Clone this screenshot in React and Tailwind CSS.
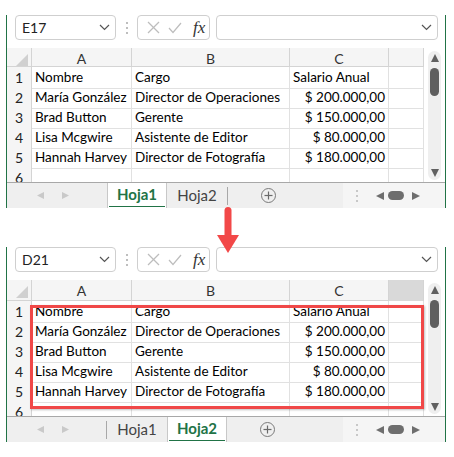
import React from 'react';

const ROWS = [
  ['Nombre', 'Cargo', 'Salario Anual'],
  ['María González', 'Director de Operaciones', '$ 200.000,00'],
  ['Brad Button', 'Gerente', '$ 150.000,00'],
  ['Lisa Mcgwire', 'Asistente de Editor', '$ 80.000,00'],
  ['Hannah Harvey', 'Director de Fotografía', '$ 180.000,00'],
  ['', '', ''],
];

function Chevron() {
  return (
    <svg width="11" height="7" viewBox="0 0 11 7">
      <polyline points="1,1 5.5,5.5 10,1" fill="none" stroke="#555" strokeWidth="1.2" />
    </svg>
  );
}

function Tri({ dir, color, size = 7 }) {
  const pts = {
    left: `${size},0 0,${size / 2} ${size},${size}`,
    right: `0,0 ${size},${size / 2} 0,${size}`,
    up: `0,${size} ${size / 2},0 ${size},${size}`,
    down: `0,0 ${size},0 ${size / 2},${size}`,
  }[dir];
  return (
    <svg width={size} height={size} viewBox={`0 0 ${size} ${size}`}>
      <polygon points={pts} fill={color} />
    </svg>
  );
}

function VDots({ color = '#b5b5b5' }) {
  return (
    <div className="flex flex-col gap-[3px]">
      <div className="w-[2px] h-[2px] rounded-full" style={{ background: color }} />
      <div className="w-[2px] h-[2px] rounded-full" style={{ background: color }} />
      <div className="w-[2px] h-[2px] rounded-full" style={{ background: color }} />
    </div>
  );
}

function Tab({ label, active }) {
  if (active) {
    return (
      <div className="w-[60px] h-full flex flex-col bg-white border-x border-[#c8c8c8]">
        <div className="flex-1 flex items-center justify-center text-[15px] font-bold text-[#217346]">{label}</div>
        <div className="mx-[1px] mb-[2px] h-[2px] bg-[#217346]" />
      </div>
    );
  }
  return (
    <div className="w-[60px] h-full flex items-center justify-center text-[15px] text-[#444]">{label}</div>
  );
}

function Panel({ cell, active, formulaMt, headerH, selCol, thumbMt }) {
  return (
    <div className="ml-[6px] w-[440px] border-x border-[#217346] bg-white">
      {/* formula bar */}
      <div className="flex items-center h-[25px]" style={{ marginTop: formulaMt }}>
        <div className="ml-[8px] w-[101px] h-[25px] rounded-[4px] border border-[#cfcfcf] flex items-center justify-between pl-[6px] pr-[5px]">
          <span className="text-[14px] text-[#222]">{cell}</span>
          <Chevron />
        </div>
        <div className="w-[21px] flex justify-center"><VDots color="#a8a8a8" /></div>
        <div className="w-[73px] h-[25px] rounded-[4px] border border-[#cfcfcf] flex items-center pl-[9px]">
          <svg width="13" height="13" viewBox="0 0 13 13">
            <line x1="1" y1="1" x2="12" y2="12" stroke="#bdbdbd" strokeWidth="1.2" />
            <line x1="12" y1="1" x2="1" y2="12" stroke="#bdbdbd" strokeWidth="1.2" />
          </svg>
          <svg width="14" height="12" viewBox="0 0 14 12" className="ml-[8px]">
            <polyline points="1,6 5,10.5 13,1" fill="none" stroke="#bdbdbd" strokeWidth="1.2" />
          </svg>
          <span className="ml-[11px] font-['Liberation_Serif',serif] italic text-[17px] text-[#333] leading-none">fx</span>
        </div>
        <div className="ml-[6px] w-[222px] h-[25px] rounded-[4px] border border-[#cfcfcf] flex items-center justify-end pr-[5px]">
          <Chevron />
        </div>
      </div>

      {/* grid + vertical scrollbar */}
      <div className="mt-[8px] flex">
        <div className="w-[417px]">
          <div className="grid grid-cols-[25px_100px_158px_99px_35px] bg-[#f5f5f5] border-b border-[#d4d4d4]" style={{ height: headerH }}>
            <div className="border-r border-[#d4d4d4] flex items-end justify-end pr-[3px] pb-[3px]">
              <svg width="12" height="12" viewBox="0 0 12 12"><polygon points="12,0 12,12 0,12" fill="#d0d0d0" /></svg>
            </div>
            {['A', 'B', 'C', 'D'].map(l => (
              <div key={l} className={`border-r border-[#d4d4d4] flex items-center justify-center text-[14px] text-[#333] ${selCol === l ? 'bg-[#d9d9d9]' : ''}`}>
                {l === 'D' ? '' : l}
              </div>
            ))}
          </div>
          <div className="h-[115px] overflow-hidden">
            {ROWS.map((r, i) => (
              <div key={i} className="grid grid-cols-[25px_100px_158px_99px_35px] h-[20px] text-[13.5px]">
                <div className="bg-[#f5f5f5] border-r border-b border-[#d4d4d4] flex items-center justify-center text-[14px] text-[#222]">{i + 1}</div>
                <div className="border-r border-b border-[#e1e1e1] flex items-center pl-[3px] text-black whitespace-nowrap">{r[0]}</div>
                <div className="border-r border-b border-[#e1e1e1] flex items-center pl-[3px] text-black whitespace-nowrap">{r[1]}</div>
                <div className={`border-r border-b border-[#e1e1e1] flex items-center text-black whitespace-nowrap ${i === 0 ? 'pl-[3px]' : 'justify-end pr-[3px]'}`}>{r[2]}</div>
                <div className="border-r border-b border-[#e1e1e1]" />
              </div>
            ))}
          </div>
        </div>
        <div className="w-[21px] flex justify-center pt-[3px] pb-[2px]">
          <div className="w-[13px] rounded-full bg-[#efefef] flex flex-col items-center pt-[3px] pb-[3px]">
            <Tri dir="up" color="#606060" size={8} />
            <div className="w-[9px] h-[28px] rounded-full bg-[#5f5f5f]" style={{ marginTop: thumbMt }} />
            <div className="flex-1" />
            <Tri dir="down" color="#606060" size={8} />
          </div>
        </div>
      </div>

      {/* sheet tabs */}
      <div className="h-[26px] flex items-center bg-[#efefef] border-t border-[#a8a8a8]">
        <div className="w-[100px] h-full flex items-center pl-[30px] gap-[18px]">
          <Tri dir="left" color="#c9c9c9" size={7} />
          <Tri dir="right" color="#c9c9c9" size={7} />
        </div>
        {active === 1 ? (
          <>
            <Tab label="Hoja1" active />
            <Tab label="Hoja2" />
            <div className="w-[1px] h-[18px] bg-[#a8a8a8]" />
          </>
        ) : (
          <>
            <div className="w-[1px] h-[18px] -ml-[1px] bg-[#a8a8a8]" />
            <Tab label="Hoja1" />
            <Tab label="Hoja2" active />
          </>
        )}
        <div className="ml-[33px] w-[15px] h-[15px] rounded-full border border-[#7a7a7a] flex items-center justify-center">
          <svg width="9" height="9" viewBox="0 0 9 9">
            <line x1="4.5" y1="0.5" x2="4.5" y2="8.5" stroke="#6a6a6a" strokeWidth="1.2" />
            <line x1="0.5" y1="4.5" x2="8.5" y2="4.5" stroke="#6a6a6a" strokeWidth="1.2" />
          </svg>
        </div>
        <div className="ml-auto w-[102px] h-full bg-[#f5f5f5] flex items-center pl-[13px]">
          <VDots color="#b8b8b8" />
          <div className="ml-[18px]"><Tri dir="left" color="#6e6e6e" size={8} /></div>
          <div className="ml-[4px] w-[16px] h-[9px] rounded-full bg-[#6e6e6e]" />
          <div className="ml-[8px]"><Tri dir="right" color="#6e6e6e" size={8} /></div>
        </div>
      </div>
    </div>
  );
}

export default function App() {
  return (
    <div className="relative w-[454px] h-[457px] bg-white overflow-hidden font-['Lato','Liberation_Sans',sans-serif]">
      <div className="pt-[10px]">
        <Panel cell="E17" active={1} formulaMt="5px" headerH="19px" thumbMt="6px" />
      </div>
      <div className="mt-[39px]">
        <Panel cell="D21" active={2} formulaMt="6px" headerH="21px" selCol="D" thumbMt="6px" />
      </div>

      {/* red arrow */}
      <svg className="absolute left-[215px] top-[206px]" width="26" height="50" viewBox="0 0 26 50">
        <rect x="9.5" y="1" width="7" height="32" rx="3.5" fill="#f24848" />
        <polygon points="2,29 24,29 13,47" fill="#f24848" />
      </svg>

      {/* highlight rectangle */}
      <div className="absolute left-[30px] top-[305px] w-[394px] h-[104px] border-[3px] border-[#f04848] shadow-[1px_1px_2px_rgba(0,0,0,0.25)]" />
    </div>
  );
}
